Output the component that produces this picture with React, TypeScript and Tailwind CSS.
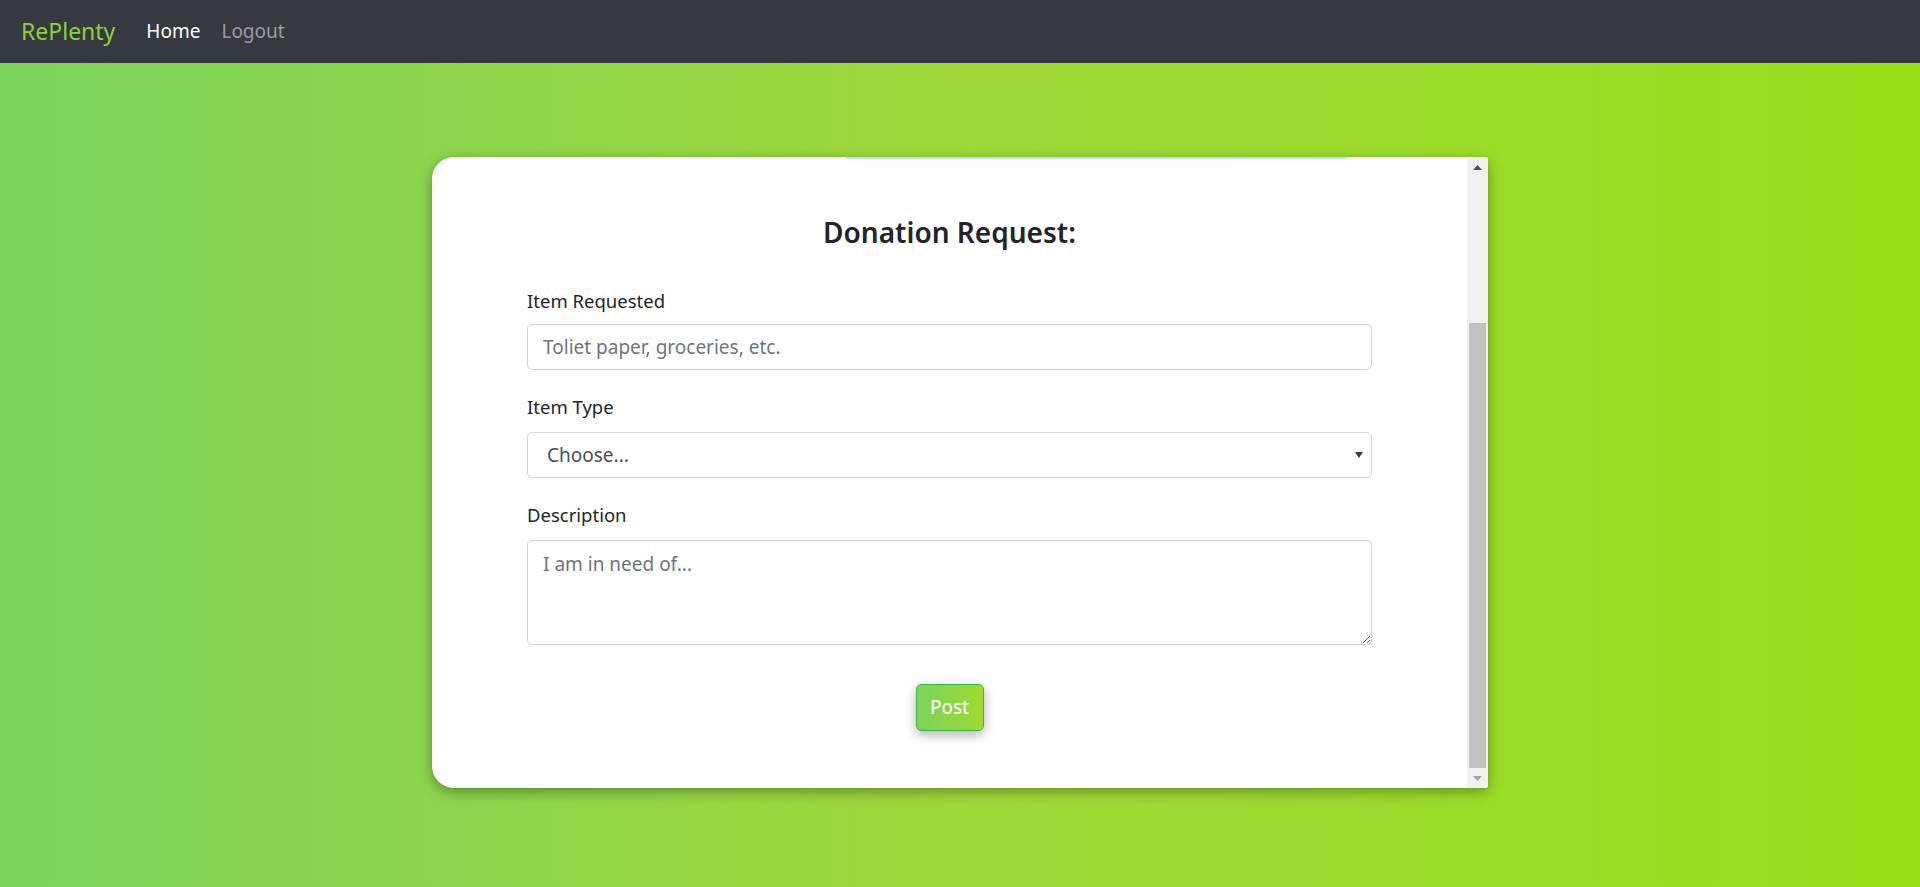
import { useState } from "react";

const font = { fontFamily: '"Noto Sans", "Open Sans", sans-serif' };

function FakeScrollbar() {
  return (
    <div className="flex w-[21px] shrink-0 flex-col items-center bg-[#f0f0f0]">
      <div className="flex h-[21px] w-full items-center justify-center">
        <svg width="9" height="5" viewBox="0 0 9 5">
          <path d="M4.5 0 L9 5 L0 5 Z" fill="#505050" />
        </svg>
      </div>
      <div className="h-[145px]" />
      <div className="w-[17px] flex-1 bg-[#c1c1c1]" />
      <div className="flex h-[20px] w-full items-center justify-center">
        <svg width="9" height="5" viewBox="0 0 9 5">
          <path d="M0 0 L9 0 L4.5 5 Z" fill="#a3a3a3" />
        </svg>
      </div>
    </div>
  );
}

export default function App() {
  const [item, setItem] = useState("");
  const [type, setType] = useState("");
  const [desc, setDesc] = useState("");

  return (
    <div className="flex min-h-[887px] flex-col" style={font}>
      <nav className="flex h-[63px] items-center bg-[#343a40] px-[21px]">
        <span className="mr-[31px] text-[23px] leading-none text-[#8dd03c]">
          RePlenty
        </span>
        <a className="mr-[21px] text-[19px] text-white">Home</a>
        <a className="text-[19px] text-[#9a9da0]">Logout</a>
      </nav>

      <main className="flex flex-1 items-center justify-center bg-gradient-to-r from-[#7ad35a] via-[#a0d838] to-[#98e018] pb-[5px]">
        <div className="flex h-[631px] w-[1056px] overflow-hidden rounded-l-[22px] rounded-r-[3px] bg-white shadow-[0_4px_14px_rgba(0,0,0,0.35)]">
          <div className="flex flex-1 flex-col items-center">
            <div className="ml-[413px] h-[2px] w-[503px] self-start bg-[#c3e2f5]" />
            <h2 className="mt-[55px] text-[28px] font-semibold leading-[36px] text-[#212529]">
              Donation Request:
            </h2>

            <form
              className="mt-[36px] flex w-[845px] flex-col"
              onSubmit={(e) => e.preventDefault()}
            >
              <label className="mb-[8px] text-[18.5px] leading-[30px] text-[#212529]">
                Item Requested
              </label>
              <input
                value={item}
                onChange={(e) => setItem(e.target.value)}
                placeholder="Toliet paper, groceries, etc."
                className="h-[46px] rounded-[5px] border border-[#ced4da] px-[15px] text-[19px] text-[#495057] placeholder:text-[#6c757d] focus:outline-none"
              />

              <label className="mb-[10px] mt-[22px] text-[18.5px] leading-[30px] text-[#212529]">
                Item Type
              </label>
              <div className="relative">
                <select
                  value={type}
                  onChange={(e) => setType(e.target.value)}
                  className="h-[46px] w-full appearance-none rounded-[5px] border border-[#ced4da] bg-white pl-[19px] text-[19px] text-[#495057] focus:outline-none"
                >
                  <option value="">Choose...</option>
                  <option value="food">Food</option>
                  <option value="household">Household</option>
                  <option value="other">Other</option>
                </select>
                <svg
                  className="pointer-events-none absolute right-[9px] top-[20px]"
                  width="8"
                  height="6"
                  viewBox="0 0 8 6"
                >
                  <path d="M0 0 L8 0 L4 6 Z" fill="#343a40" />
                </svg>
              </div>

              <label className="mb-[10px] mt-[22px] text-[18.5px] leading-[30px] text-[#212529]">
                Description
              </label>
              <textarea
                value={desc}
                onChange={(e) => setDesc(e.target.value)}
                placeholder="I am in need of..."
                className="h-[105px] rounded-[5px] border border-[#ced4da] px-[15px] py-[9px] text-[19px] text-[#495057] placeholder:text-[#6c757d] focus:outline-none"
              />

              <button
                type="submit"
                className="mt-[39px] h-[47px] w-[68px] self-center rounded-[5px] border border-[#3bb54a] bg-gradient-to-r from-[#7ad35a] to-[#9ed92f] text-[19px] text-white shadow-[0_4px_12px_rgba(0,0,0,0.3)]"
              >
                Post
              </button>
            </form>
          </div>
          <FakeScrollbar />
        </div>
      </main>
    </div>
  );
}
